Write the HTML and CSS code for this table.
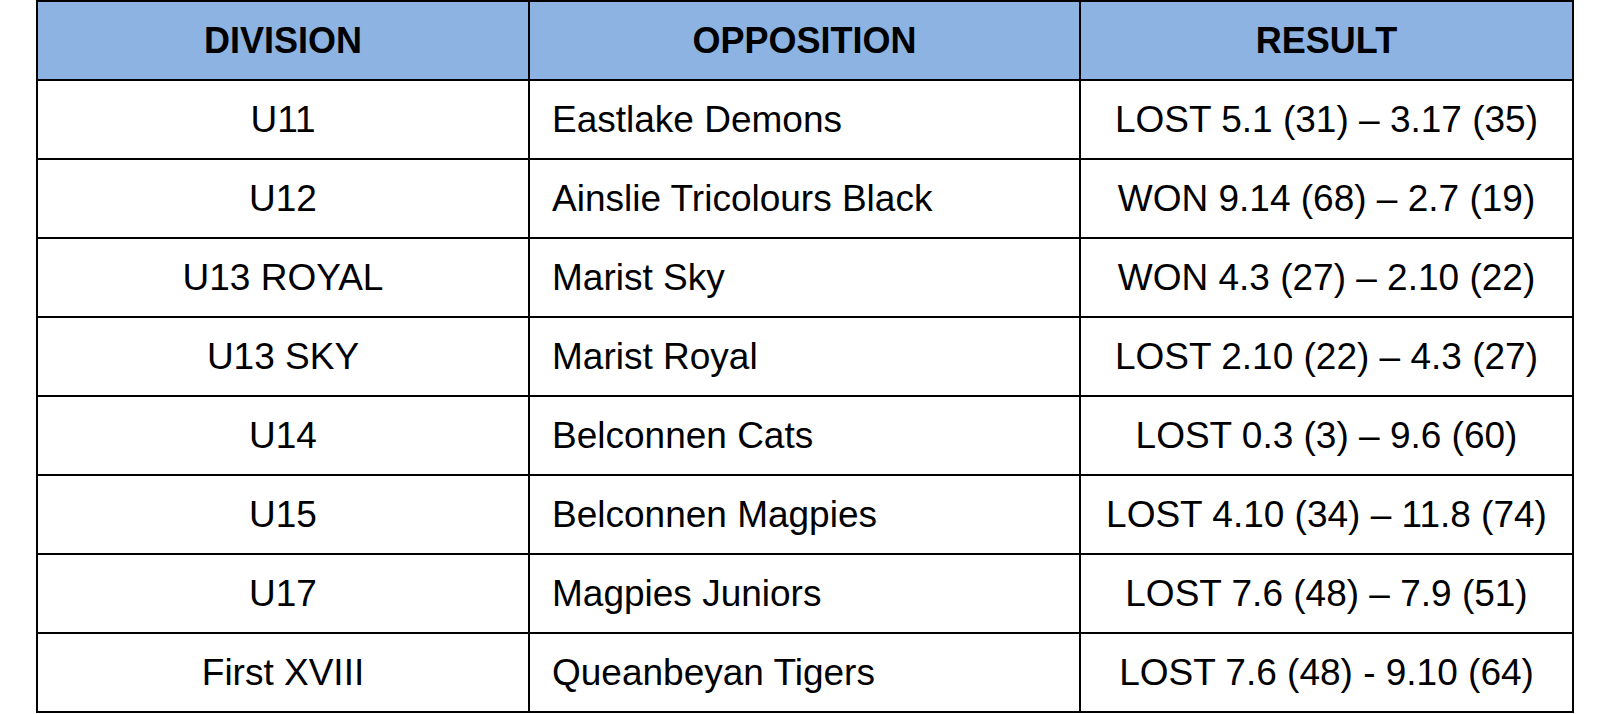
FILE: index.html
```html
<!DOCTYPE html>
<html>
<head>
<meta charset="utf-8">
<link rel="stylesheet" href="styles.css">
</head>
<body>
<div class="results" role="table">
  <div class="cell head" role="columnheader">DIVISION</div>
  <div class="cell head" role="columnheader">OPPOSITION</div>
  <div class="cell head" role="columnheader">RESULT</div>

  <div class="cell center">U11</div>
  <div class="cell left">Eastlake Demons</div>
  <div class="cell center">LOST 5.1 (31) – 3.17 (35)</div>

  <div class="cell center">U12</div>
  <div class="cell left">Ainslie Tricolours Black</div>
  <div class="cell center">WON 9.14 (68) – 2.7 (19)</div>

  <div class="cell center">U13 ROYAL</div>
  <div class="cell left">Marist Sky</div>
  <div class="cell center">WON 4.3 (27) – 2.10 (22)</div>

  <div class="cell center">U13 SKY</div>
  <div class="cell left">Marist Royal</div>
  <div class="cell center">LOST 2.10 (22) – 4.3 (27)</div>

  <div class="cell center">U14</div>
  <div class="cell left">Belconnen Cats</div>
  <div class="cell center">LOST 0.3 (3) – 9.6 (60)</div>

  <div class="cell center">U15</div>
  <div class="cell left">Belconnen Magpies</div>
  <div class="cell center">LOST 4.10 (34) – 11.8 (74)</div>

  <div class="cell center">U17</div>
  <div class="cell left">Magpies Juniors</div>
  <div class="cell center">LOST 7.6 (48) – 7.9 (51)</div>

  <div class="cell center">First XVIII</div>
  <div class="cell left">Queanbeyan Tigers</div>
  <div class="cell center">LOST 7.6 (48) - 9.10 (64)</div>
</div>
</body>
</html>
```

FILE: styles.css
```css
html, body {
  margin: 0;
  padding: 0;
  background: #ffffff;
}

body {
  font-family: "Liberation Sans", Arial, sans-serif;
  color: #000000;
}

.results {
  display: grid;
  grid-template-columns: 490px 549px 491px;
  grid-auto-rows: 77px;
  gap: 2px;
  padding: 2px;
  background: #000000;
  width: max-content;
  margin-left: 36px;
}

.cell {
  display: flex;
  align-items: center;
  background: #ffffff;
  font-size: 37px;
  padding-top: 1px;
  box-sizing: border-box;
  white-space: nowrap;
}

.head {
  background: #8db3e2;
  font-weight: bold;
  font-size: 36px;
  justify-content: center;
  padding-top: 0;
}

.center {
  justify-content: center;
}

.left {
  justify-content: flex-start;
  padding-left: 22px;
}
```
